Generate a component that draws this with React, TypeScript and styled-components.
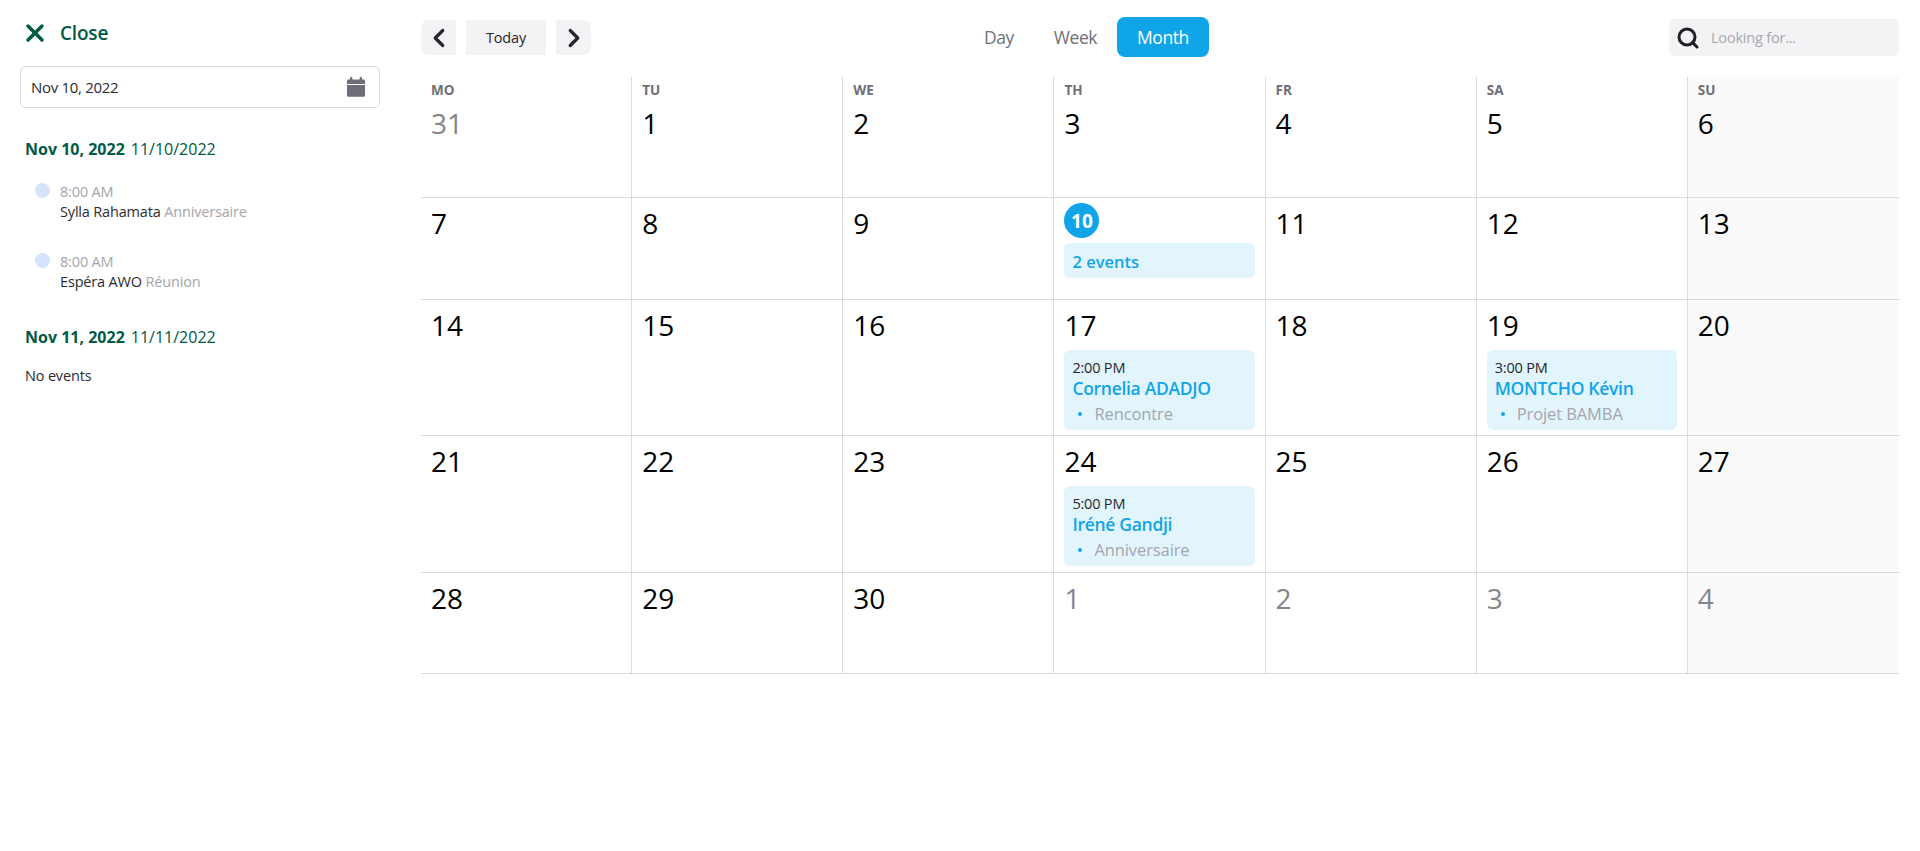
import React from 'react';
import styled, { createGlobalStyle } from 'styled-components';
import { ChevronLeft, ChevronRight, Search, X } from 'lucide-react';

const GlobalStyle = createGlobalStyle`
  * {
    box-sizing: border-box;
  }
  html,
  body {
    margin: 0;
    background: #fff;
    font-family: 'Open Sans', 'Noto Sans', sans-serif;
  }
`;

const Page = styled.div`
  display: flex;
  width: 1920px;
  height: 851px;
  overflow: hidden;
`;

const Sidebar = styled.aside`
  width: 421px;
  flex-shrink: 0;
  padding: 22px 41px 0 20px;
`;

const CloseRow = styled.div`
  display: flex;
  align-items: center;
  gap: 11px;
  height: 22px;
  padding-left: 5px;
  color: #005a44;
  font-size: 19px;
  font-weight: 600;
  letter-spacing: -0.2px;
`;

const DateField = styled.div`
  display: flex;
  align-items: center;
  justify-content: space-between;
  height: 42px;
  margin-top: 22px;
  padding: 0 13px 0 10px;
  border: 1px solid #dcdcdf;
  border-radius: 5px;
  color: #2b2b33;
  font-size: 15px;
  letter-spacing: -0.3px;
`;

const DayTitle = styled.div<{ $gap: number }>`
  margin-top: ${(p) => p.$gap}px;
  padding-left: 5px;
  color: #005a44;
  font-size: 16px;
  line-height: 20px;
  b {
    font-weight: 700;
    margin-right: 6px;
  }
`;

const EventItem = styled.div<{ $gap: number }>`
  display: flex;
  gap: 10px;
  margin-top: ${(p) => p.$gap}px;
  padding-left: 15px;
`;

const EventDot = styled.span`
  width: 15px;
  height: 15px;
  margin-top: 1px;
  flex-shrink: 0;
  border-radius: 50%;
  background: #d5e3fb;
`;

const EventText = styled.div`
  font-size: 14.5px;
  line-height: 20px;
  letter-spacing: -0.17px;
  color: #2b2b33;
`;

const Muted = styled.span`
  color: #a5a5ad;
`;

const NoEvents = styled.div`
  margin-top: 19px;
  padding-left: 5px;
  color: #2b2b33;
  font-size: 14.5px;
  line-height: 20px;
  letter-spacing: -0.17px;
`;

const Main = styled.main`
  flex: 1;
  padding: 0 21px 0 0;
`;

const Toolbar = styled.div`
  display: grid;
  grid-template-columns: 543px auto 1fr;
  align-items: center;
  height: 75px;
  margin-bottom: 2px;
`;

const NavGroup = styled.div`
  display: flex;
  gap: 10px;
`;

const NavButton = styled.button<{ $side?: 'left' | 'right' }>`
  display: flex;
  align-items: center;
  justify-content: center;
  width: ${(p) => (p.$side ? '35px' : '80px')};
  height: 35px;
  padding: 0;
  border: none;
  border-radius: ${(p) =>
    p.$side === 'left' ? '8px 0 0 8px' : p.$side === 'right' ? '0 8px 8px 0' : '0'};
  background: #f3f3f5;
  color: #26262c;
  font-family: inherit;
  font-size: 14.5px;
  letter-spacing: -0.2px;
`;

const ViewGroup = styled.div`
  display: flex;
  align-items: center;
  margin-top: -1px;
`;

const ViewButton = styled.button<{ $active?: boolean }>`
  height: 40px;
  padding: 0 20px;
  border: none;
  border-radius: 8px;
  background: ${(p) => (p.$active ? '#10a5e9' : 'transparent')};
  color: ${(p) => (p.$active ? '#fff' : '#70707a')};
  font-family: inherit;
  font-size: 17.5px;
  letter-spacing: -0.45px;
`;

const SearchBox = styled.div`
  display: flex;
  align-items: center;
  justify-self: end;
  gap: 11px;
  width: 230px;
  height: 37px;
  padding-left: 7px;
  border-radius: 6px;
  background: #f3f3f5;
  color: #a8a8b0;
  font-size: 14.5px;
  letter-spacing: -0.2px;
`;

const Grid = styled.div`
  display: grid;
  grid-template-columns: repeat(7, 1fr);
  grid-template-rows: 121px 102px 136px 137px 101px;
`;

const Cell = styled.div<{ $weekend: boolean }>`
  padding: 0 10px;
  border-bottom: 1px solid #dcdcdc;
  border-right: ${(p) => (p.$weekend ? 'none' : '1px solid #dcdcdc')};
  background: ${(p) => (p.$weekend ? '#fafafa' : '#fff')};
`;

const WeekDay = styled.div`
  height: 21px;
  padding-top: 5px;
  color: #6e6e78;
  font-size: 13.5px;
  line-height: 16px;
  font-weight: 700;
`;

const DayNumber = styled.div<{ $outside: boolean }>`
  height: 45px;
  padding-top: 2px;
  color: ${(p) => (p.$outside ? '#85858a' : '#000')};
  font-size: 28px;
  line-height: 46px;
`;

const TodayBadge = styled.div`
  display: flex;
  align-items: center;
  justify-content: center;
  width: 35px;
  height: 35px;
  margin: 5px 0;
  border-radius: 50%;
  background: #10a5e9;
  color: #fff;
  font-size: 19px;
  font-weight: 700;
`;

const CountChip = styled.div`
  height: 35px;
  padding-left: 8px;
  border-radius: 6px;
  background: #e3f5fc;
  color: #10a5e9;
  font-size: 16.5px;
  font-weight: 600;
  line-height: 37px;
`;

const EventCard = styled.div`
  height: 80px;
  margin-top: 5px;
  padding: 8px 8px 0;
  border-radius: 6px;
  background: #e3f5fc;
`;

const CardTime = styled.div`
  color: #26262c;
  font-size: 14.5px;
  line-height: 19px;
  letter-spacing: -0.2px;
`;

const CardName = styled.div`
  color: #10a5e9;
  font-size: 17.5px;
  font-weight: 600;
  line-height: 23px;
  letter-spacing: -0.3px;
`;

const CardTag = styled.div`
  display: flex;
  align-items: center;
  gap: 12px;
  margin-top: 2px;
  padding-left: 6px;
  color: #a5a5ad;
  font-size: 16.5px;
  line-height: 23px;
  letter-spacing: -0.1px;
  &::before {
    content: '';
    width: 4px;
    height: 4px;
    border-radius: 50%;
    background: #10a5e9;
  }
`;

const CalendarIcon = () => (
  <svg width="20" height="20" viewBox="0 0 20 20" fill="#6e6e78">
    <rect x="4" y="0" width="2.4" height="4" rx="1" />
    <rect x="13.6" y="0" width="2.4" height="4" rx="1" />
    <path d="M2 2.4h16a1.5 1.5 0 0 1 1 1.5V7H1V3.9a1.5 1.5 0 0 1 1-1.5z" />
    <path d="M1 8h18v10.2a1.5 1.5 0 0 1-1.5 1.5h-15A1.5 1.5 0 0 1 1 18.2z" />
  </svg>
);

interface DayEvent {
  time: string;
  name: string;
  tag: string;
}

interface CalendarDay {
  day: number;
  outside?: boolean;
  today?: boolean;
  count?: string;
  event?: DayEvent;
}

const WEEK_DAYS = ['MO', 'TU', 'WE', 'TH', 'FR', 'SA', 'SU'];

const DAYS: CalendarDay[] = [
  { day: 31, outside: true },
  ...[1, 2, 3, 4, 5, 6, 7, 8, 9].map((day) => ({ day })),
  { day: 10, today: true, count: '2 events' },
  ...[11, 12, 13, 14, 15, 16].map((day) => ({ day })),
  { day: 17, event: { time: '2:00 PM', name: 'Cornelia ADADJO', tag: 'Rencontre' } },
  { day: 18 },
  { day: 19, event: { time: '3:00 PM', name: 'MONTCHO Kévin', tag: 'Projet BAMBA' } },
  ...[20, 21, 22, 23].map((day) => ({ day })),
  { day: 24, event: { time: '5:00 PM', name: 'Iréné Gandji', tag: 'Anniversaire' } },
  ...[25, 26, 27, 28, 29, 30].map((day) => ({ day })),
  { day: 1, outside: true },
  { day: 2, outside: true },
  { day: 3, outside: true },
  { day: 4, outside: true },
];

const App = () => (
  <Page>
    <GlobalStyle />
    <Sidebar>
      <CloseRow>
        <X size={28} strokeWidth={3} style={{ marginLeft: -4 }} />
        Close
      </CloseRow>
      <DateField>
        Nov 10, 2022
        <CalendarIcon />
      </DateField>
      <DayTitle $gap={31}>
        <b>Nov 10, 2022</b>11/10/2022
      </DayTitle>
      <EventItem $gap={23}>
        <EventDot />
        <EventText>
          <Muted>8:00 AM</Muted>
          <br />
          Sylla Rahamata <Muted>Anniversaire</Muted>
        </EventText>
      </EventItem>
      <EventItem $gap={30}>
        <EventDot />
        <EventText>
          <Muted>8:00 AM</Muted>
          <br />
          Espéra AWO <Muted>Réunion</Muted>
        </EventText>
      </EventItem>
      <DayTitle $gap={35}>
        <b>Nov 11, 2022</b>11/11/2022
      </DayTitle>
      <NoEvents>No events</NoEvents>
    </Sidebar>
    <Main>
      <Toolbar>
        <NavGroup>
          <NavButton $side="left" aria-label="Previous">
            <ChevronLeft size={30} strokeWidth={2.6} />
          </NavButton>
          <NavButton>Today</NavButton>
          <NavButton $side="right" aria-label="Next">
            <ChevronRight size={30} strokeWidth={2.6} />
          </NavButton>
        </NavGroup>
        <ViewGroup>
          <ViewButton>Day</ViewButton>
          <ViewButton>Week</ViewButton>
          <ViewButton $active>Month</ViewButton>
        </ViewGroup>
        <SearchBox>
          <Search size={24} strokeWidth={3} color="#1f1f24" />
          Looking for...
        </SearchBox>
      </Toolbar>
      <Grid>
        {DAYS.map((d, i) => (
          <Cell key={i} $weekend={i % 7 === 6}>
            {i < 7 && <WeekDay>{WEEK_DAYS[i]}</WeekDay>}
            {d.today ? (
              <TodayBadge>{d.day}</TodayBadge>
            ) : (
              <DayNumber $outside={!!d.outside}>{d.day}</DayNumber>
            )}
            {d.count && <CountChip>{d.count}</CountChip>}
            {d.event && (
              <EventCard>
                <CardTime>{d.event.time}</CardTime>
                <CardName>{d.event.name}</CardName>
                <CardTag>{d.event.tag}</CardTag>
              </EventCard>
            )}
          </Cell>
        ))}
      </Grid>
    </Main>
  </Page>
);

export default App;
